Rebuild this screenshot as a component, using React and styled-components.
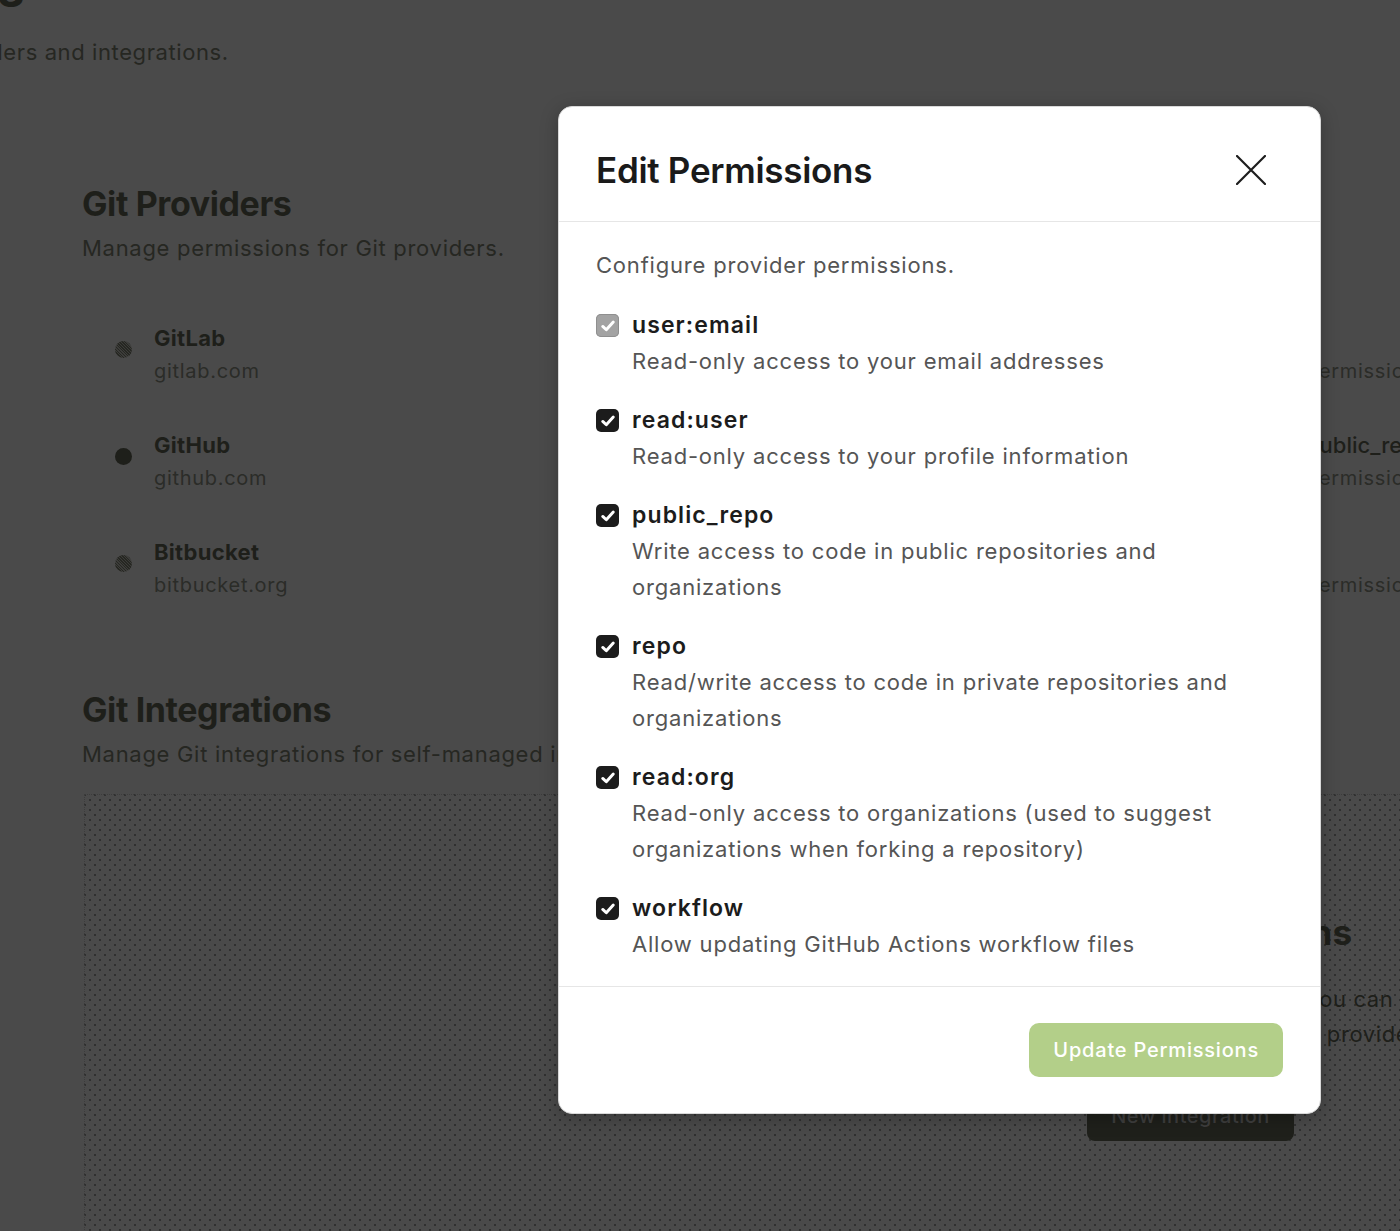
import styled, { createGlobalStyle } from "styled-components";

const GlobalStyle = createGlobalStyle`
  html, body {
    margin: 0;
    padding: 0;
    background: #4a4a4a;
    overflow: hidden;
  }
  body {
    font-family: Inter, "Noto Sans", "Liberation Sans", sans-serif;
    -webkit-font-smoothing: antialiased;
  }
`;

const providers = [
  { name: "GitLab", domain: "gitlab.com", hatched: true, scopes: null, note: "permissions" },
  { name: "GitHub", domain: "github.com", hatched: false, scopes: "public_repo, read:user", note: "permissions" },
  { name: "Bitbucket", domain: "bitbucket.org", hatched: true, scopes: null, note: "permissions" },
];

const permissions = [
  { key: "user:email", desc: "Read-only access to your email addresses", disabled: true },
  { key: "read:user", desc: "Read-only access to your profile information" },
  { key: "public_repo", desc: "Write access to code in public repositories and organizations" },
  { key: "repo", desc: "Read/write access to code in private repositories and organizations" },
  { key: "read:org", desc: "Read-only access to organizations (used to suggest organizations when forking a repository)" },
  { key: "workflow", desc: "Allow updating GitHub Actions workflow files" },
];

const App = () => {
  return (
    <Screen>
      <GlobalStyle />
      <Page>
        <TopHeader>
          <PageTitle>Integrations</PageTitle>
          <PageSubtitle>Manage your Git providers and integrations.</PageSubtitle>
        </TopHeader>

        <Section $top={116}>
          <SectionTitle>Git Providers</SectionTitle>
          <SectionSubtitle>Manage permissions for Git providers.</SectionSubtitle>
          <ProviderList>
            {providers.map((p) => (
              <ProviderRow key={p.name}>
                <ProviderMain>
                  <ProviderDot $hatched={p.hatched} />
                  <div>
                    <ProviderName>{p.name}</ProviderName>
                    <ProviderDomain>{p.domain}</ProviderDomain>
                  </div>
                </ProviderMain>
                <ProviderSide>
                  <SideScopes>{p.scopes || "\u00a0"}</SideScopes>
                  <SideNote>{p.note}</SideNote>
                </ProviderSide>
              </ProviderRow>
            ))}
          </ProviderList>
        </Section>

        <Section $top={90}>
          <SectionTitle>Git Integrations</SectionTitle>
          <SectionSubtitle>Manage Git integrations for self-managed instances.</SectionSubtitle>
          <DottedBox>
            <EmptyTitle>No Git Integrations</EmptyTitle>
            <EmptyText>
              Create an integration so that you can
              <br />
              connect repositories from your Git providers.
            </EmptyText>
            <DarkButton>New integration</DarkButton>
          </DottedBox>
        </Section>
      </Page>

      <Overlay>
        <Dialog role="dialog" aria-labelledby="edit-permissions-title">
          <DialogHeader>
            <DialogTitle id="edit-permissions-title">Edit Permissions</DialogTitle>
            <CloseButton aria-label="Close">
              <svg width="30" height="30" viewBox="0 0 30 30" fill="none">
                <path d="M1 1L29 29M29 1L1 29" stroke="#1d1d1d" strokeWidth="2.2" strokeLinecap="round" />
              </svg>
            </CloseButton>
          </DialogHeader>
          <DialogBody>
            <Intro>Configure provider permissions.</Intro>
            {permissions.map((perm) => (
              <PermItem key={perm.key}>
                <Check $disabled={perm.disabled}>
                  <svg width="16" height="16" viewBox="0 0 14 14" fill="none">
                    <path d="M2.4 7.4L5.5 10.3L11.6 3.6" stroke="#fff" strokeWidth="2.6" strokeLinecap="round" strokeLinejoin="round" />
                  </svg>
                </Check>
                <PermText>
                  <PermKey>{perm.key}</PermKey>
                  <PermDesc>{perm.desc}</PermDesc>
                </PermText>
              </PermItem>
            ))}
          </DialogBody>
          <DialogFooter>
            <PrimaryButton disabled>Update Permissions</PrimaryButton>
          </DialogFooter>
        </Dialog>
      </Overlay>
    </Screen>
  );
};

export default App;

const Screen = styled.div`
  width: 1400px;
  height: 1231px;
  overflow: hidden;
  position: relative;
  background: #4a4a4a;
`;

const Page = styled.div`
  padding-left: 82px;
  color: #1e1f1a;
`;

const TopHeader = styled.header`
  margin-left: -335px;
  margin-top: -38px;
  white-space: nowrap;
`;

const PageTitle = styled.h1`
  margin: 0;
  font-size: 48px;
  line-height: 56px;
  font-weight: 700;
  letter-spacing: -0.5px;
`;

const PageSubtitle = styled.p`
  margin: 18px 0 0;
  font-size: 22px;
  line-height: 32px;
  color: #262722;
  letter-spacing: 0.6px;
`;

const Section = styled.section`
  margin-top: ${(p) => p.$top}px;
`;

const SectionTitle = styled.h2`
  margin: 0;
  font-size: 34px;
  line-height: 40px;
  font-weight: 700;
  letter-spacing: -0.4px;
`;

const SectionSubtitle = styled.p`
  margin: 8px 0 0;
  font-size: 22px;
  line-height: 32px;
  color: #262722;
  letter-spacing: 0.7px;
  white-space: nowrap;
`;

const ProviderList = styled.div`
  margin: 59px 0 0 33px;
  display: flex;
  flex-direction: column;
  gap: 44px;
`;

const ProviderRow = styled.div`
  display: grid;
  grid-template-columns: 1191px 1fr;
`;

const ProviderMain = styled.div`
  display: flex;
  align-items: flex-start;
  gap: 22px;
`;

const ProviderDot = styled.span`
  width: 17px;
  height: 17px;
  margin-top: 18px;
  border-radius: 50%;
  flex-shrink: 0;
  background: ${(p) =>
    p.$hatched
      ? "repeating-linear-gradient(45deg, #262722 0 1px, #3c3c3a 1px 2px)"
      : "#1e1f1a"};
`;

const ProviderName = styled.div`
  font-size: 22px;
  line-height: 30px;
  font-weight: 700;
  letter-spacing: 0.3px;
`;

const ProviderDomain = styled.div`
  margin-top: 3px;
  font-size: 20px;
  line-height: 30px;
  color: #2b2c28;
  letter-spacing: 0.7px;
`;

const ProviderSide = styled.div`
  white-space: nowrap;
`;

const SideScopes = styled.div`
  font-size: 22px;
  line-height: 30px;
  font-weight: 500;
`;

const SideNote = styled.div`
  margin-top: 3px;
  font-size: 20px;
  line-height: 30px;
  color: #2b2c28;
  letter-spacing: 0.7px;
`;

const DottedBox = styled.div`
  margin: 24px 0 0 2px;
  width: 2212px;
  height: 700px;
  box-sizing: border-box;
  border-top: 1px dotted #3c3c3c;
  border-left: 1px dotted #3c3c3c;
  background-color: #4a4a4a;
  background-image: radial-gradient(circle, #303030 0.7px, transparent 1.1px),
    radial-gradient(circle, #303030 0.7px, transparent 1.1px);
  background-size: 10px 10px;
  background-position: 0 0, 5px 5px;
  display: flex;
  flex-direction: column;
  align-items: center;
  padding-top: 117px;
`;

const EmptyTitle = styled.h3`
  margin: 0;
  font-size: 35px;
  line-height: 40px;
  font-weight: 700;
  letter-spacing: 0.2px;
`;

const EmptyText = styled.p`
  margin: 30px 0 0;
  font-size: 22px;
  line-height: 35px;
  text-align: center;
  color: #1e1f1a;
  letter-spacing: 0.6px;
  white-space: nowrap;
`;

const DarkButton = styled.button`
  margin-top: 38px;
  height: 51px;
  padding: 0 24px;
  border: none;
  border-radius: 8px;
  background: #1f201b;
  color: #3e3e3e;
  font-family: inherit;
  font-size: 20px;
  font-weight: 500;
  letter-spacing: 0.5px;
`;

const Overlay = styled.div`
  position: absolute;
  inset: 0;
`;

const Dialog = styled.div`
  position: absolute;
  left: 558px;
  top: 106px;
  width: 763px;
  box-sizing: border-box;
  background: #fff;
  border-radius: 14px;
  border: 1px solid #d8d8d8;
  box-shadow: 0 4px 18px rgba(0, 0, 0, 0.25);
  display: flex;
  flex-direction: column;
  color: #1c1c1c;
`;

const DialogHeader = styled.div`
  height: 115px;
  box-sizing: border-box;
  padding: 12px 54px 0 37px;
  display: flex;
  align-items: center;
  justify-content: space-between;
  border-bottom: 1px solid #e6e6e6;
`;

const DialogTitle = styled.h2`
  margin: 0;
  font-size: 35px;
  line-height: 40px;
  font-weight: 600;
  letter-spacing: -0.3px;
  color: #1a1a1a;
`;

const CloseButton = styled.button`
  border: none;
  background: none;
  padding: 0;
  display: flex;
  margin-top: 0;
`;

const DialogBody = styled.div`
  padding: 25px 37px 24px;
  display: flex;
  flex-direction: column;
  gap: 23px;
  border-bottom: 1px solid #e6e6e6;
`;

const Intro = styled.p`
  margin: 0 0 1px;
  font-size: 22px;
  line-height: 36px;
  color: #555;
  letter-spacing: 0.8px;
`;

const PermItem = styled.div`
  display: flex;
  align-items: flex-start;
  gap: 13px;
`;

const Check = styled.span`
  margin-top: 7px;
  width: 23px;
  height: 23px;
  border-radius: 5px;
  flex-shrink: 0;
  display: flex;
  align-items: center;
  justify-content: center;
  background: ${(p) => (p.$disabled ? "#a3a3a3" : "#1c1c1c")};
  box-shadow: ${(p) => (p.$disabled ? "inset 0 0 0 1px #8f8f8f" : "none")};
`;

const PermText = styled.div`
  display: flex;
  flex-direction: column;
  max-width: 620px;
`;

const PermKey = styled.div`
  font-size: 23px;
  line-height: 36px;
  font-weight: 600;
  letter-spacing: 1.1px;
  color: #1c1c1c;
`;

const PermDesc = styled.div`
  font-size: 22px;
  line-height: 36px;
  color: #555;
  letter-spacing: 0.8px;
`;

const DialogFooter = styled.div`
  padding: 36px 37px 36px;
  display: flex;
  justify-content: flex-end;
`;

const PrimaryButton = styled.button`
  height: 54px;
  padding: 0 24px;
  border: none;
  border-radius: 10px;
  background: #b3cf89;
  color: #fff;
  font-family: inherit;
  font-size: 20px;
  font-weight: 500;
  letter-spacing: 0.8px;
  cursor: default;
`;
